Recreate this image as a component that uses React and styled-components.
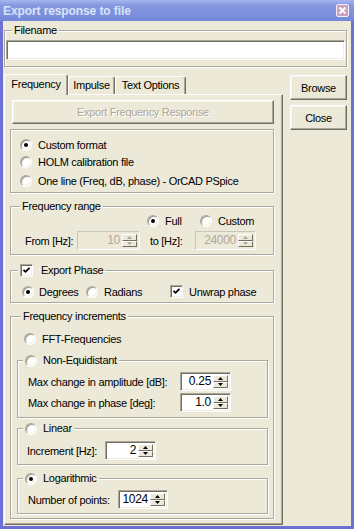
import React from 'react';
import styled, { createGlobalStyle } from 'styled-components';

const GlobalStyle = createGlobalStyle`
    html, body {
        margin: 0;
        padding: 0;
        background: #ECE9D8;
    }
    body {
        font-family: "Liberation Sans", Arial, sans-serif;
        font-size: 11px;
        letter-spacing: -0.3px;
        color: #000;
    }
    * {
        box-sizing: border-box;
    }
`;

const Window = styled.div`
    width: 354px;
    height: 529px;
    display: flex;
    flex-direction: column;
`;

const TitleBar = styled.div`
    flex: none;
    height: 21px;
    display: flex;
    align-items: center;
    justify-content: space-between;
    padding: 0 5px 0 3px;
    background: linear-gradient(#A6B7EE, #8598E0 25%, #7B8FDC 70%, #7388D9);
`;

const Title = styled.span`
    font-size: 12px;
    font-weight: bold;
    letter-spacing: -0.1px;
    color: #D8E4F8;
`;

const CloseBox = styled.div`
    width: 13px;
    height: 13px;
    border: 1px solid #F4F0F8;
    border-radius: 2px;
    background: #C7A0C2;
    display: flex;
    align-items: center;
    justify-content: center;
`;

const Frame = styled.div`
    flex: 1;
    display: flex;
    flex-direction: column;
    background: #ECE9D8;
    border: 3px solid #6D70D7;
    border-top: none;
    padding: 3px 4px 1px 1px;
`;

const Group = styled.fieldset`
    margin: ${p => p.$mt || 0}px 0 0 0;
    padding: ${p => p.$pt || 0}px ${p => p.$pr || 0}px ${p => p.$pb || 0}px ${p => p.$pl || 0}px;
    border: 1px solid #ACA899;
    box-shadow: 1px 1px 0 #fff, inset 1px 1px 0 #fff;
    min-width: 0;
    display: flex;
    flex-direction: column;
`;

const Legend = styled.legend`
    margin-left: ${p => p.$ml || 0}px;
    padding: 0 2px;
    height: 13px;
    line-height: 13px;
    background: #ECE9D8;
    display: flex;
    align-items: center;
    gap: ${p => p.$gap || 6}px;
`;

const TextField = styled.div`
    height: 20px;
    margin-top: 3px;
    background: #fff;
    border: 1px solid;
    border-color: #ACA899 #fff #fff #ACA899;
    box-shadow: inset 1px 1px 0 #716F64, inset -1px -1px 0 #F1EFE2;
`;

const MainRow = styled.div`
    flex: 1;
    display: flex;
    margin-top: 7px;
`;

const TabControl = styled.div`
    width: 279px;
    display: flex;
    flex-direction: column;
`;

const TabStrip = styled.div`
    height: 20px;
    display: flex;
    align-items: flex-end;
    position: relative;
    z-index: 1;
`;

const Tab = styled.div`
    width: ${p => p.$w}px;
    height: ${p => (p.$active ? 21 : 18)}px;
    margin-bottom: ${p => (p.$active ? -1 : 0)}px;
    padding-bottom: ${p => (p.$active ? 3 : 1)}px;
    background: #ECE9D8;
    border-top: 1px solid #fff;
    border-left: 1px solid #fff;
    border-right: 1px solid #716F64;
    box-shadow: inset -1px 0 0 #ACA899;
    border-radius: 3px 3px 0 0;
    display: flex;
    align-items: center;
    justify-content: center;
`;

const Panel = styled.div`
    flex: 1;
    display: flex;
    flex-direction: column;
    border: 1px solid;
    border-color: #fff #716F64 #716F64 #fff;
    box-shadow: inset -1px -1px 0 #ACA899;
    padding: 5px 8px 0 5px;
`;

const Button = styled.div`
    height: ${p => p.$h || 25}px;
    width: ${p => (p.$w ? `${p.$w}px` : 'auto')};
    margin: ${p => p.$m || 0};
    display: flex;
    align-items: center;
    justify-content: center;
    border: 1px solid;
    border-color: #fff #716F64 #716F64 #fff;
    box-shadow: inset -1px -1px 0 #ACA899, inset 1px 1px 0 #F5F4EC;
    background: #ECE9D8;
    color: ${p => (p.$disabled ? '#ACA899' : '#000')};
    text-shadow: ${p => (p.$disabled ? '1px 1px 0 #fff' : 'none')};
`;

const SideButtons = styled.div`
    display: flex;
    flex-direction: column;
    gap: 5px;
    margin: 1px 0 0 7px;
`;

const Row = styled.div`
    display: flex;
    align-items: center;
    height: ${p => p.$h || 13}px;
    margin-top: ${p => p.$mt || 0}px;
    padding-left: ${p => p.$pl || 0}px;
`;

const Option = styled.div`
    display: flex;
    align-items: center;
    gap: ${p => p.$gap || 6}px;
    width: ${p => (p.$w ? `${p.$w}px` : 'auto')};
    flex: none;
`;

const RadioMark = styled.span`
    width: 12px;
    height: 12px;
    flex: none;
    border-radius: 50%;
    background: #fff;
    border: 1px solid;
    border-color: #ACA899 #fff #fff #ACA899;
    box-shadow: inset 1px 1px 0 #9D9A8C, inset -1px -1px 0 #F1EFE2;
    display: flex;
    align-items: center;
    justify-content: center;

    &::after {
        content: '';
        display: ${p => (p.$checked ? 'block' : 'none')};
        width: 4px;
        height: 4px;
        border-radius: 50%;
        background: #000;
    }
`;

const CheckMark = styled.span`
    width: 13px;
    height: 13px;
    flex: none;
    background: #fff;
    border: 1px solid;
    border-color: #ACA899 #fff #fff #ACA899;
    box-shadow: inset 1px 1px 0 #716F64, inset -1px -1px 0 #F1EFE2;
    display: flex;
    align-items: center;
    justify-content: center;
`;

const Label = styled.span`
    width: ${p => (p.$w ? `${p.$w}px` : 'auto')};
    flex: none;
    white-space: nowrap;
`;

const SpinBox = styled.div`
    width: ${p => p.$w}px;
    height: 19px;
    flex: none;
    display: flex;
    padding: 2px;
    background: ${p => (p.$disabled ? '#ECE9D8' : '#fff')};
    border: 1px solid;
    border-color: ${p => (p.$disabled ? '#C9C7BA #fff #fff #C9C7BA' : '#ACA899 #fff #fff #ACA899')};
    box-shadow: ${p => (p.$disabled ? 'none' : 'inset 1px 1px 0 #716F64, inset -1px -1px 0 #F1EFE2')};
`;

const SpinValue = styled.div`
    flex: 1;
    text-align: right;
    padding-right: 2px;
    line-height: 13px;
    font-size: 12px;
    color: ${p => (p.$disabled ? '#ACA899' : '#000')};
`;

const SpinButtons = styled.div`
    width: 15px;
    display: flex;
    flex-direction: column;
`;

const SpinButton = styled.div`
    flex: 1;
    display: flex;
    align-items: center;
    justify-content: center;
    border: 1px solid;
    border-color: #fff #716F64 #716F64 #fff;
    background: #ECE9D8;
`;

const Radio = ({ checked, children, w, gap }) => (
    <Option $w={w} $gap={gap}>
        <RadioMark $checked={checked} />
        {children && <Label>{children}</Label>}
    </Option>
);

const Tick = () => (
    <svg width="9" height="9" viewBox="0 0 9 9">
        <polyline points="1.5,3.8 3.5,5.8 7.5,1.8" fill="none" stroke="#000" strokeWidth="1.8" />
    </svg>
);

const Checkbox = ({ children, gap }) => (
    <Option $gap={gap}>
        <CheckMark><Tick /></CheckMark>
        <Label>{children}</Label>
    </Option>
);

const Arrow = ({ up, disabled }) => (
    <svg width="5" height="3" viewBox="0 0 5 3">
        <polygon points={up ? '0,3 2.5,0 5,3' : '0,0 5,0 2.5,3'} fill={disabled ? '#ACA899' : '#000'} />
    </svg>
);

const Spin = ({ value, w = 51, disabled }) => (
    <SpinBox $w={w} $disabled={disabled}>
        <SpinValue $disabled={disabled}>{value}</SpinValue>
        <SpinButtons>
            <SpinButton><Arrow up disabled={disabled} /></SpinButton>
            <SpinButton><Arrow disabled={disabled} /></SpinButton>
        </SpinButtons>
    </SpinBox>
);

const CloseIcon = () => (
    <svg width="9" height="9" viewBox="0 0 9 9">
        <path d="M1.5 1.5 L7.5 7.5 M7.5 1.5 L1.5 7.5" stroke="#fff" strokeWidth="1.8" />
    </svg>
);

const App = () => {
    return (
        <Window>
            <GlobalStyle />
            <TitleBar>
                <Title>Export response to file</Title>
                <CloseBox><CloseIcon /></CloseBox>
            </TitleBar>
            <Frame>
                <Group $pl={1} $pr={1} $pb={6}>
                    <Legend $ml={6}>Filename</Legend>
                    <TextField />
                </Group>
                <MainRow>
                    <TabControl>
                        <TabStrip>
                            <Tab $w={64} $active>Frequency</Tab>
                            <Tab $w={47}>Impulse</Tab>
                            <Tab $w={71}>Text Options</Tab>
                        </TabStrip>
                        <Panel>
                            <Button $h={24} $m="0 0 0 2px" $disabled>Export Frequency Response</Button>

                            <Group $mt={5} $pl={9} $pt={8} $pb={5}>
                                <Row><Radio checked>Custom format</Radio></Row>
                                <Row $mt={4}><Radio>HOLM calibration file</Radio></Row>
                                <Row $mt={6}><Radio>One line (Freq, dB, phase) - OrCAD PSpice</Radio></Row>
                            </Group>

                            <Group $mt={7} $pl={2} $pt={1} $pb={4}>
                                <Legend $ml={7}>Frequency range</Legend>
                                <Row $pl={134}>
                                    <Radio checked w={53}>Full</Radio>
                                    <Radio>Custom</Radio>
                                </Row>
                                <Row $h={19} $mt={4} $pl={12}>
                                    <Label $w={52}>From [Hz]:</Label>
                                    <Spin value="10" w={63} disabled />
                                    <Label $w={55} style={{ paddingLeft: 10 }}>to [Hz]:</Label>
                                    <Spin value="24000" w={61} disabled />
                                </Row>
                            </Group>

                            <Group $mt={9} $pl={2} $pt={8} $pb={4}>
                                <Legend $ml={5}>
                                    <Checkbox gap={8}>Export Phase</Checkbox>
                                </Legend>
                                <Row $pl={9}>
                                    <Radio checked w={64} gap={5}>Degrees</Radio>
                                    <Radio w={84}>Radians</Radio>
                                    <Checkbox>Unwrap phase</Checkbox>
                                </Row>
                            </Group>

                            <Group $mt={7} $pl={6} $pr={5} $pt={9} $pb={4}>
                                <Legend $ml={4}>Frequency increments</Legend>
                                <Row $pl={7}><Radio>FFT-Frequencies</Radio></Row>

                                <Group $mt={9} $pt={5} $pb={5}>
                                    <Legend $ml={5}><Radio>Non-Equidistant</Radio></Legend>
                                    <Row $h={19} $pl={10}>
                                        <Label $w={152}>Max change in amplitude [dB]:</Label>
                                        <Spin value="0.25" />
                                    </Row>
                                    <Row $h={19} $mt={2} $pl={10}>
                                        <Label $w={152}>Max change in phase [deg]:</Label>
                                        <Spin value="1.0" />
                                    </Row>
                                </Group>

                                <Group $mt={4} $pt={6} $pb={4}>
                                    <Legend $ml={5}><Radio>Linear</Radio></Legend>
                                    <Row $h={19} $pl={9}>
                                        <Label $w={78}>Increment [Hz]:</Label>
                                        <Spin value="2" />
                                    </Row>
                                </Group>

                                <Group $mt={7} $pt={5} $pb={4}>
                                    <Legend $ml={5}><Radio checked>Logarithmic</Radio></Legend>
                                    <Row $h={19} $pl={10}>
                                        <Label $w={90}>Number of points:</Label>
                                        <Spin value="1024" w={50} />
                                    </Row>
                                </Group>
                            </Group>
                        </Panel>
                    </TabControl>
                    <SideButtons>
                        <Button $w={57}>Browse</Button>
                        <Button $w={57}>Close</Button>
                    </SideButtons>
                </MainRow>
            </Frame>
        </Window>
    );
};

export default App;
